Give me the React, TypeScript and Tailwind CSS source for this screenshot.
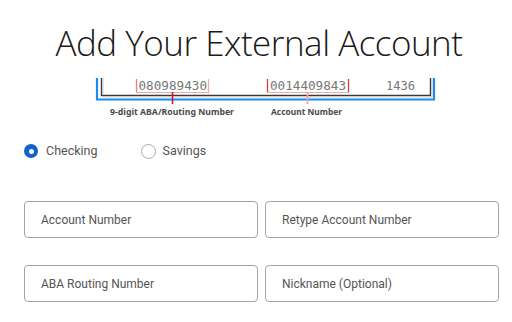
import React from "react";

function CheckDiagram() {
  return (
    <svg width="512" height="42" viewBox="0 78 512 42" className="block">
      <path d="M97 78 V99.5 H434 V78" fill="none" stroke="#1a8cf0" strokeWidth="2.2" />
      <path d="M101.5 78 V95.5 H430.5 V78" fill="none" stroke="#3a3a3a" strokeWidth="1.4" />
      <path d="M103 78 V94" fill="none" stroke="#c8c8c8" strokeWidth="1" />
      <path d="M432 78 V97 H103" fill="none" stroke="#d0d0d0" strokeWidth="1" />
      <path d="M136.5 79 V92.5 H208.5 V79" fill="none" stroke="#f2a9a9" strokeWidth="1.2" />
      <path d="M136.5 79 V92" fill="none" stroke="#e88080" strokeWidth="1.2" />
      <path d="M172.5 92 V104" fill="none" stroke="#d8161b" strokeWidth="1.6" />
      <path d="M267.5 79 V92.5 H348.5 V79" fill="none" stroke="#f2a9a9" strokeWidth="1.2" />
      <path d="M267.5 79 V92 M348.5 79 V92" fill="none" stroke="#d43a3a" strokeWidth="1.2" />
      <path d="M307.5 93 V104" fill="none" stroke="#f0a8a8" strokeWidth="1.8" />
      <g fontFamily="'DejaVu Sans Mono', monospace" fontSize="12" fill="#777" fontWeight="300">
        <text x="138.5" y="90" textLength="68.5" lengthAdjust="spacingAndGlyphs">080989430</text>
        <text x="270" y="90" textLength="76" lengthAdjust="spacingAndGlyphs">0014409843</text>
        <text x="386" y="90" textLength="29" lengthAdjust="spacingAndGlyphs">1436</text>
      </g>
      <g fontFamily="'Noto Sans', sans-serif" fontSize="8.5" fontWeight="700" fill="#4a4a4a">
        <text x="110" y="115" textLength="124" lengthAdjust="spacingAndGlyphs">9-digit ABA/Routing Number</text>
        <text x="271" y="115" textLength="71" lengthAdjust="spacingAndGlyphs">Account Number</text>
      </g>
    </svg>
  );
}

function Field({ label }: { label: string }) {
  return (
    <div className="h-[37px] rounded-[4px] border border-[#a3a3a3] flex items-center pl-[16px] text-[12px] text-[#555] bg-white">
      {label}
    </div>
  );
}

export default function App() {
  return (
    <div className="w-[512px] h-[322px] bg-white overflow-hidden" style={{ fontFamily: "Roboto, sans-serif" }}>
      <div className="h-[78px] pt-[25px]">
        <h1
          className="text-center text-[35px] leading-[36px] font-light text-[#1a1a1a] pl-[6px] tracking-[-0.5px]"
          style={{ fontFamily: "'Open Sans', sans-serif" }}
        >
          Add Your External Account
        </h1>
      </div>
      <CheckDiagram />
      <div className="flex items-center pl-[24px] mt-[23px] h-[16px] text-[12.5px] text-[#555]">
        <div className="flex items-center gap-[8px]">
          <span className="w-[14px] h-[14px] rounded-full bg-[#1462c8] flex items-center justify-center">
            <span className="w-[5px] h-[5px] rounded-full bg-white" />
          </span>
          <span>Checking</span>
        </div>
        <div className="flex items-center gap-[7px] ml-[43px]">
          <span className="w-[15px] h-[15px] rounded-full border border-[#aaa]" />
          <span>Savings</span>
        </div>
      </div>
      <div className="grid grid-cols-2 gap-x-[7px] gap-y-[27px] pl-[24px] pr-[13px] mt-[42px]">
        <Field label="Account Number" />
        <Field label="Retype Account Number" />
        <Field label="ABA Routing Number" />
        <Field label="Nickname (Optional)" />
      </div>
    </div>
  );
}
